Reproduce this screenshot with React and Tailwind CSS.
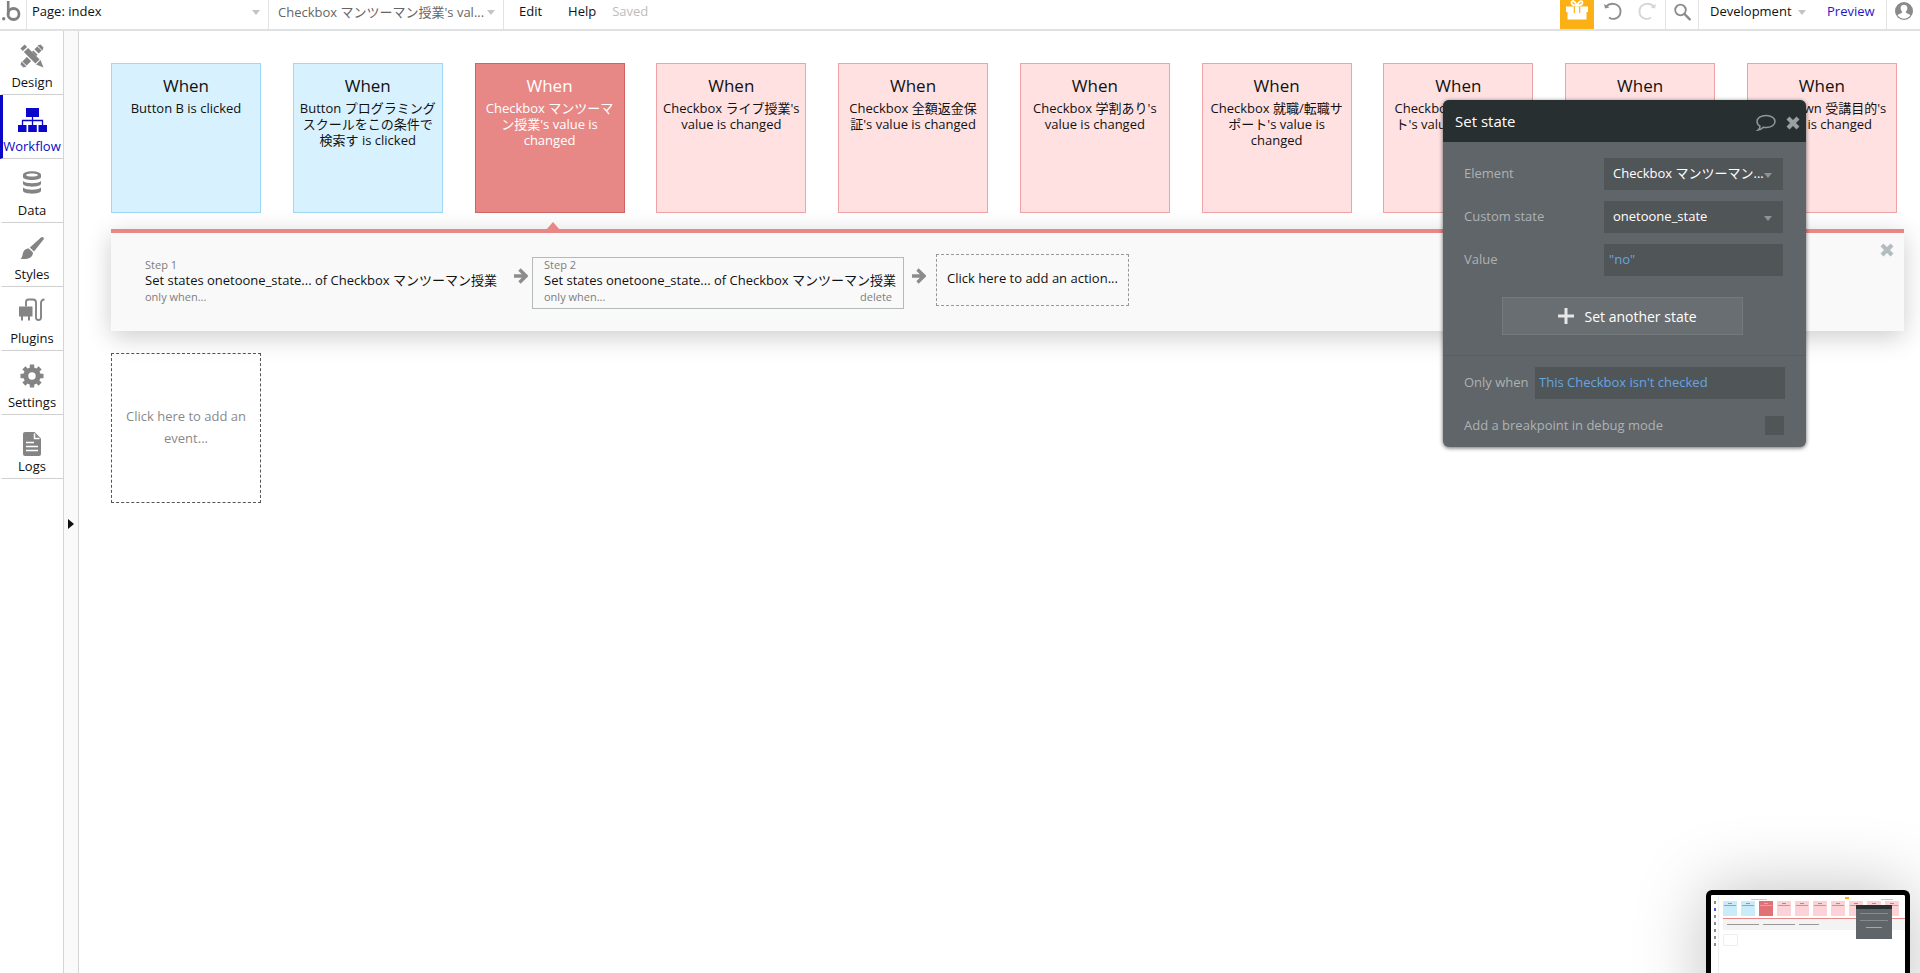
import { useState } from "react";

const NAV = [
    { label: 'Design',   icon: DesignIcon },
    { label: 'Workflow', icon: WorkflowIcon },
    { label: 'Data',     icon: DataIcon },
    { label: 'Styles',   icon: StylesIcon },
    { label: 'Plugins',  icon: PluginIcon },
    { label: 'Settings', icon: SettingsIcon },
    { label: 'Logs',     icon: LogsIcon },
];

const EVENTS = [
    { text: 'Button B is clicked',                              tone: 'blue' },
    { text: 'Button プログラミングスクールをこの条件で検索す is clicked', tone: 'blue' },
    { text: "Checkbox マンツーマン授業's value is changed",        tone: 'active' },
    { text: "Checkbox ライブ授業's value is changed",             tone: 'pink' },
    { text: "Checkbox 全額返金保証's value is changed",           tone: 'pink' },
    { text: "Checkbox 学割あり's value is changed",               tone: 'pink' },
    { text: "Checkbox 就職/転職サポート's value is changed",       tone: 'pink' },
    { text: "Checkbox 転職サポート's value is changed",           tone: 'pink' },
    { text: "Checkbox 無料体験's value is changed",               tone: 'pink' },
    { text: "Dropdown 受講目的's value is changed",               tone: 'pink' },
];

const TONE = {
    blue:   'bg-[#d7f1ff] border-[#a0d8f5] text-[#111]',
    active: 'bg-[#e88886] border-[#d06464] text-white',
    pink:   'bg-[#ffe1e2] border-[#f0a3a6] text-[#111]',
};

const MINI = {
    blue:   'bg-[#c9ebfa] text-[#4c6a78]',
    active: 'bg-[#e27176] text-[#f5c6c8]',
    pink:   'bg-[#fbd3d6] text-[#84595c]',
};

export default function App() {
    return (
        <div className="flex flex-col h-screen overflow-hidden bg-white font-['Open_Sans','Noto_Sans_CJK_JP',sans-serif] text-[13px] text-[#111]">
            <TopBar/>
            <div className="flex flex-1 min-h-0">
                <SideNav/>
                <button aria-label="Expand panel" className="w-4 shrink-0 bg-[#fafafa] border-x border-[#d5d5d5] flex items-center justify-center pt-[44px]">
                    <svg width="6" height="10" viewBox="0 0 6 10"><path d="M0 0L6 5L0 10Z" fill="#111"/></svg>
                </button>
                <main className="flex-1 min-w-0 pl-8 pt-8 pr-4">
                    <div className="flex justify-between mr-[7px]">
                        {EVENTS.map((e, i) => <EventCard key={i} {...e}/>)}
                    </div>
                    <StepsPanel/>
                    <button className="mt-[22px] w-[150px] h-[150px] border border-dashed border-[#555] px-2 pb-0.5 text-[13px] leading-[22px] text-[#8a8a8a]">
                        Click here to add an event...
                    </button>
                </main>
            </div>
            <SetStateDialog/>
            <MiniPreview/>
        </div>
    );
}

function Caret({ className }) {
    return (
        <svg width="8" height="5" viewBox="0 0 8 5" className={`shrink-0 ${className}`}>
            <path d="M0 0H8L4 5Z" fill="currentColor"/>
        </svg>
    );
}

function TopBar() {
    return (
        <header className="h-[31px] shrink-0 flex border-b-2 border-[#dfe2e2]">
            <a href="#home" aria-label="Home" className="w-[27px] border-r border-[#e3e3e3]">
                <svg width="24" height="24" viewBox="0 0 24 24" fill="none" stroke="#808080">
                    <path d="M8.200 1V14.5" strokeWidth="2.600"/>
                    <circle cx="13.5" cy="14" r="5.5" strokeWidth="2.800"/>
                    <circle cx="3.700" cy="18.700" r="1.700" fill="#808080" stroke="none"/>
                </svg>
            </a>
            <button className="w-[241px] h-6 flex items-center justify-between pl-[5px] pr-2">
                Page: index <Caret className="text-[#c4c4c4]"/>
            </button>
            <button className="w-[236px] border-x border-[#e3e3e3] pb-1 flex items-center justify-between pl-[9px] pr-2 text-[#666]">
                <span className="whitespace-nowrap">Checkbox マンツーマン授業's val...</span> <Caret className="text-[#c4c4c4]"/>
            </button>
            <nav className="h-6 flex items-center gap-[26px] pl-[15px]">
                <button>Edit</button>
                <button>Help</button>
                <span className="-ml-2.5 text-[#bcbcbc]">Saved</span>
            </nav>
            <div className="ml-auto flex">
                <button aria-label="Gift" className="w-[34px] bg-[#fbb116] flex justify-center">
                    <svg width="24" height="20" viewBox="0 0 24 20" fill="#fff">
                        <path d="M1 6.500H23V12H1ZM2.500 12H21.500V19.500H2.500Z"/>
                        <path d="M12 5.500C9 5.500 6.500 4.500 6.500 2.500C6.500 0.500 9.500 0 12 5.500C14.500 0 17.500 0.500 17.500 2.500C17.500 4.500 15 5.500 12 5.500Z" fill="none" stroke="#fff" strokeWidth="1.800"/>
                        <path d="M9.300 6.500V13M14.700 6.500V13" stroke="#fbb116" strokeWidth="1.200"/>
                    </svg>
                </button>
                <button aria-label="Undo" className="w-9 pl-2 pb-2 text-[#8f8f8f]"><UndoIcon/></button>
                <button aria-label="Redo" className="w-[35px] pl-2 pb-2 text-[#d6d6d6]"><UndoIcon className="-scale-x-100"/></button>
                <button aria-label="Search" className="w-[34px] border-x border-[#e3e3e3] pl-2 pb-1.5">
                    <svg width="18" height="18" viewBox="0 0 18 18" fill="none" stroke="#8a8a8a">
                        <circle cx="6.500" cy="7" r="5.300" strokeWidth="1.800"/>
                        <path d="M10.500 11L15.800 16.300" strokeWidth="2.400" strokeLinecap="round"/>
                    </svg>
                </button>
                <button className="h-6 w-[115px] flex items-center justify-between pl-[11px] pr-2">
                    Development <Caret className="text-[#c4c4c4]"/>
                </button>
                <a href="#preview" className="h-6 w-[72px] flex items-center pl-[13px] text-[#1f18c9]">Preview</a>
                <button aria-label="Account" className="w-[34px] border-l border-[#e3e3e3] pl-2 pb-2">
                    <svg width="18" height="18" viewBox="0 0 18 18">
                        <circle cx="9" cy="9" r="9" fill="#8a8a8a"/>
                        <path d="M9 2.800C11.500 2.800 12.600 4.500 12.300 6.800C12.100 8.300 11.500 9 10.800 9.800C11 12 14.500 11.500 15.300 13.500A7.800 7.800 0 0 1 2.700 13.500C3.500 11.500 7 12 7.200 9.800C6.500 9 5.900 8.300 5.700 6.800C5.400 4.500 6.500 2.800 9 2.800Z" fill="#fff"/>
                    </svg>
                </button>
            </div>
        </header>
    );
}

function UndoIcon({ className = '' }) {
    return (
        <svg width="20" height="20" viewBox="0 0 20 20" fill="none" stroke="currentColor" strokeWidth="1.900" className={className}>
            <path d="M4 5.500C9 0.500 18.500 2.500 18.500 10.500C18.500 17 11.500 19.500 7 16.500"/>
            <path d="M2 3L3 7.500L7.500 6.500Z" fill="currentColor" stroke="none"/>
        </svg>
    );
}

function SideNav() {
    const [active, setActive] = useState('Workflow');
    return (
        <nav className="w-[63px] shrink-0 flex flex-col">
            {NAV.map(({ label, icon: Icon }) => (
                <button key={label} onClick={() => setActive(label)}
                    className={`h-16 flex flex-col items-center border-b border-[#cfcfcf] pt-2.5 border-l-[3px] ${label === active ? 'border-l-[#0b07c8] text-[#0b07c8]' : 'border-l-transparent text-[#848484]'}`}>
                    <span className="h-[30px] flex items-center justify-center -ml-0.5"><Icon/></span>
                    <span className={`-ml-0.5 leading-[22px] ${label === active ? '' : 'text-[#111]'}`}>{label}</span>
                </button>
            ))}
        </nav>
    );
}

function DesignIcon() {
    return (
        <svg width="24" height="24" viewBox="0 0 24 24">
            <path d="M4.500 19.500L19.500 4.500" stroke="currentColor" strokeWidth="6" strokeDasharray="7 1.500"/>
            <path d="M17.500 1.500L20.500 0.500L23.500 3.500L22.500 6.500ZM1.500 17.500L0.500 20.500L3.500 23.500L6.500 22.500Z" fill="currentColor"/>
            <path d="M3.500 4.500L19 20" stroke="#fff" strokeWidth="7"/>
            <path d="M2.500 2.500L5 5M6 6L17.500 17.500" stroke="currentColor" strokeWidth="6"/>
            <path d="M20.500 16L23.500 23.500L16 20.500Z" fill="currentColor"/>
        </svg>
    );
}

function WorkflowIcon() {
    return (
        <svg width="29" height="24" viewBox="0 0 29 24" fill="currentColor">
            <path d="M8 0H21V9H8ZM0 17H8.500V24H0ZM10.200 17H18.800V24H10.200ZM20.500 17H29V24H20.500Z"/>
            <path d="M14.500 9V17M4.500 17V12.500H24.500V17" fill="none" stroke="currentColor" strokeWidth="1.300"/>
        </svg>
    );
}

function DataIcon() {
    return (
        <svg width="18" height="23" viewBox="0 0 18 23" fill="currentColor" className="mb-1">
            <path fillRule="evenodd" d="M0 4C0 -1 18 -1 18 4V6C18 10 0 10 0 6ZM3 4C4 6 14 6 15 4C14 2 4 2 3 4Z"/>
            <path d="M0 10C3 13 15 13 18 10V13C17 16.500 1 16.500 0 13Z"/>
            <path d="M0 16.500C3 19.500 15 19.500 18 16.500V20C17 23.500 1 23.500 0 20Z"/>
        </svg>
    );
}

function StylesIcon() {
    return (
        <svg width="24" height="24" viewBox="0 0 24 24" fill="currentColor">
            <path d="M22 1Q24.500 1 23.500 3.500L14 15.500L9.800 11.500L21 1.400Z"/>
            <path d="M8.800 12.500L13 16.500C13 21 9 23.800 0.500 22.800C3 21 2 19 3.300 16C4.300 13.500 6.500 12.300 8.800 12.500Z"/>
        </svg>
    );
}

function PluginIcon() {
    return (
        <svg width="26" height="24" viewBox="0 0 26 24" className="mb-1">
            <path d="M0 8.500H13.500V18.500H0ZM2 18.500H4V22.500H2ZM9 18.500H11V22.500H9Z" fill="currentColor"/>
            <path d="M7 8.500V4Q7 1.500 9.500 1.500H14Q17 1.500 17 4.500V19.500A2.500 2.500 0 0 0 22 19.500V5Q22 1.500 25.500 1.500" fill="none" stroke="currentColor" strokeWidth="1.900"/>
        </svg>
    );
}

function SettingsIcon() {
    return (
        <svg width="24" height="24" viewBox="0 0 24 24" fill="none" stroke="currentColor">
            <circle cx="12" cy="12" r="6.200" strokeWidth="5"/>
            <path d="M12 0.500V4M12 20V23.500M0.500 12H4M20 12H23.500M3.900 3.900L6.300 6.300M17.700 17.700L20.100 20.100M3.900 20.100L6.300 17.700M17.700 6.300L20.100 3.900" strokeWidth="4.400"/>
        </svg>
    );
}

function LogsIcon() {
    return (
        <svg width="18" height="24" viewBox="0 0 18 24" className="mt-2">
            <path d="M2 0H11.500L18 6.500V22Q18 24 16 24H2Q0 24 0 22V2Q0 0 2 0Z" fill="currentColor"/>
            <path d="M11.500 1.500V6.500H16.500M3 10.500H11M3 14.500H15M3 18.500H15" fill="none" stroke="#fff" strokeWidth="1.500"/>
        </svg>
    );
}

function EventCard({ text, tone }) {
    return (
        <button className={`w-[150px] h-[150px] shrink-0 border px-1 pt-2.5 flex flex-col items-center text-center ${TONE[tone]}`}>
            <span className="text-[17px] leading-6 mb-0.5">When</span>
            <span className="leading-4">{text}</span>
        </button>
    );
}

function Cross({ className }) {
    return (
        <svg width="14" height="14" viewBox="0 0 14 14" className={className}>
            <path d="M2 2L12 12M12 2L2 12" stroke="currentColor" strokeWidth="4.200"/>
        </svg>
    );
}

function Arrow() {
    return (
        <svg width="14" height="16" viewBox="0 0 14 16" fill="none" stroke="#8c8c8c" strokeWidth="3.400">
            <path d="M0 8H11M5.500 1.500L12 8L5.500 14.500"/>
        </svg>
    );
}

function Step({ n, selected }) {
    return (
        <div className={`w-[372px] h-[52px] border px-[11px] ${selected ? 'border-[#b4b9b9]' : 'border-transparent'}`}>
            <div className="text-[11px] leading-[14px] text-[#7d7d7d]">Step {n}</div>
            <div className="leading-4 whitespace-nowrap">Set states onetoone_state... of Checkbox マンツーマン授業</div>
            <div className="flex justify-between text-[11px] leading-[18px] text-[#7d7d7d]">
                <span>only when...</span>
                {selected && <button>delete</button>}
            </div>
        </div>
    );
}

function StepsPanel() {
    return (
        <section className="relative mt-4 h-[102px] border-t-4 border-[#e88886] bg-[#f9f9f9] shadow-[0_6px_24px_rgba(0,0,0,0.2)] flex items-start pl-[22px] pt-6">
            <svg width="14" height="8" viewBox="0 0 14 8" className="absolute left-[435px] -top-[11px]"><path d="M7 0L14 8H0Z" fill="#e88886"/></svg>
            <Step n={1}/>
            <div className="w-[27px] flex justify-end pr-1 pt-[11px]"><Arrow/></div>
            <Step n={2} selected/>
            <div className="w-8 flex pl-2 pt-[11px]"><Arrow/></div>
            <button className="-mt-[3px] pb-0.5 h-[52px] w-[193px] border border-dashed border-[#999]">Click here to add an action...</button>
            <button aria-label="Close" className="ml-auto -mt-3.5 mr-2.5 text-[#b3bcbe]"><Cross/></button>
        </section>
    );
}

function SetStateDialog() {
    return (
        <div role="dialog" aria-labelledby="dlg-title" className="absolute left-[1443px] top-[100px] w-[363px] rounded-md overflow-hidden bg-[#5f6569] text-[#aeb2b4] shadow-[0_1px_4px_rgba(0,0,0,0.6)]">
            <div className="h-[42px] bg-[#272f31] flex items-center pl-3 pr-1.5">
                <h2 id="dlg-title" className="text-[15px] text-white">Set state</h2>
                <button aria-label="Comment" className="ml-auto mr-2.5 mt-1">
                    <svg width="20" height="18" viewBox="0 0 20 18" fill="none" stroke="#8f9799" strokeWidth="1.500">
                        <path d="M10 1.500C15 1.500 19 4 19 7.500C19 11 15 13.500 10 13.500Q8.500 13.500 7.300 13.200Q5 15.800 2 16Q4 14.500 4 12.200Q1 10.400 1 7.500C1 4 5 1.500 10 1.500Z"/>
                    </svg>
                </button>
                <button aria-label="Close dialog" className="mt-1 text-[#98a0a2]"><Cross/></button>
            </div>
            <div className="pl-[21px] pr-[23px] pt-4 flex flex-col gap-[11px] border-b border-[#596063] pb-5">
                <PickRow id="element" label="Element" value="Checkbox マンツーマン..."/>
                <PickRow id="custom" label="Custom state" value="onetoone_state"/>
                <div className="flex items-center">
                    <label htmlFor="value" className="flex-1">Value</label>
                    <input id="value" defaultValue={'"no"'} className="w-[179px] h-8 bg-[#505558] px-[5px] pb-0.5 text-[#64a6e4]"/>
                </div>
                <button className="mt-2.5 ml-[38px] w-[241px] h-[38px] pl-2.5 bg-[#696e72] border border-[#757a7d] text-white text-[14px] flex items-center justify-center gap-2.5">
                    <svg width="16" height="16" viewBox="0 0 16 16"><path d="M8 0V16M0 8H16" stroke="#e6e6e6" strokeWidth="3"/></svg>
                    Set another state
                </button>
            </div>
            <div className="pl-[21px] pr-[21px] pt-[11px] flex items-center justify-between">
                <label htmlFor="when">Only when</label>
                <input id="when" defaultValue="This Checkbox isn't checked" className="w-[250px] h-8 bg-[#505558] px-1 pb-0.5 text-[#64a6e4]"/>
            </div>
            <div className="pl-[21px] pr-[22px] pt-[17px] pb-[11px] flex items-center justify-between">
                <label htmlFor="breakpoint">Add a breakpoint in debug mode</label>
                <input id="breakpoint" type="checkbox" className="appearance-none w-[19px] h-[19px] bg-[#505558]"/>
            </div>
        </div>
    );
}

function PickRow({ id, label, value }) {
    return (
        <div className="flex items-center">
            <label htmlFor={id} className="flex-1">{label}</label>
            <div className="relative w-[179px]">
                <select id={id} className="appearance-none w-full h-8 bg-[#505558] pl-[9px] text-white">
                    <option>{value}</option>
                </select>
                <Caret className="absolute right-[11px] top-[15px] text-[#8d9294] pointer-events-none"/>
            </div>
        </div>
    );
}

function MiniPreview() {
    return (
        <div aria-hidden="true" className="absolute right-2.5 top-[890px] w-[204px] h-[130px] rounded-md border-[5px] border-b-0 border-black bg-white shadow-[0_0_70px_rgba(0,0,0,0.25)] flex">
            <div className="w-2 shrink-0 border-r border-[#eee] pt-1.5 flex flex-col gap-1 items-center">
                {NAV.map(n => <div key={n.label} className={`w-0.5 h-[3px] ${n.label === 'Workflow' ? 'bg-[#5b57d8]' : 'bg-[#8d8d8d]'}`}/>)}
            </div>
            <div className="flex-1 min-w-0 pl-1 overflow-hidden">
                <div className="h-1.5 flex items-start">
                    <div className="ml-7 w-4 h-px mt-1 bg-[#ccc]"/>
                    <div className="ml-auto mr-8 w-1 h-0.5 mt-0.5 bg-[#fbb116]"/>
                    <div className="mr-3 w-3 h-px mt-1 bg-[#ccc]"/>
                </div>
                <div className="flex gap-1">
                    {EVENTS.map((e, i) => (
                        <div key={i} className={`w-[14px] h-[15px] shrink-0 flex flex-col items-center gap-px pt-0.5 ${MINI[e.tone]}`}>
                            <div className="w-1 h-px bg-current opacity-60"/>
                            <div className="w-3 h-px bg-current opacity-50"/>
                        </div>
                    ))}
                </div>
                <div className="mt-0.5 h-3 border-t border-[#e88886] bg-[#f3f3f3] flex items-center gap-1 pl-1">
                    <div className="w-8 h-px bg-[#999]"/>
                    <div className="w-8 h-px bg-[#999]"/>
                    <div className="w-5 h-px bg-[#999]"/>
                </div>
                <div className="mt-1 w-[15px] h-3 border border-[#eee]"/>
            </div>
            <div className="absolute left-[145px] top-2.5 w-9 h-[34px] bg-[#5f6569] border-t-4 border-[#272f31] flex flex-col gap-1.5 items-center pt-1">
                <div className="w-7 h-px bg-[#878c8f]"/>
                <div className="w-7 h-px bg-[#878c8f]"/>
                <div className="w-4 h-px bg-[#a4a8aa]"/>
            </div>
        </div>
    );
}
